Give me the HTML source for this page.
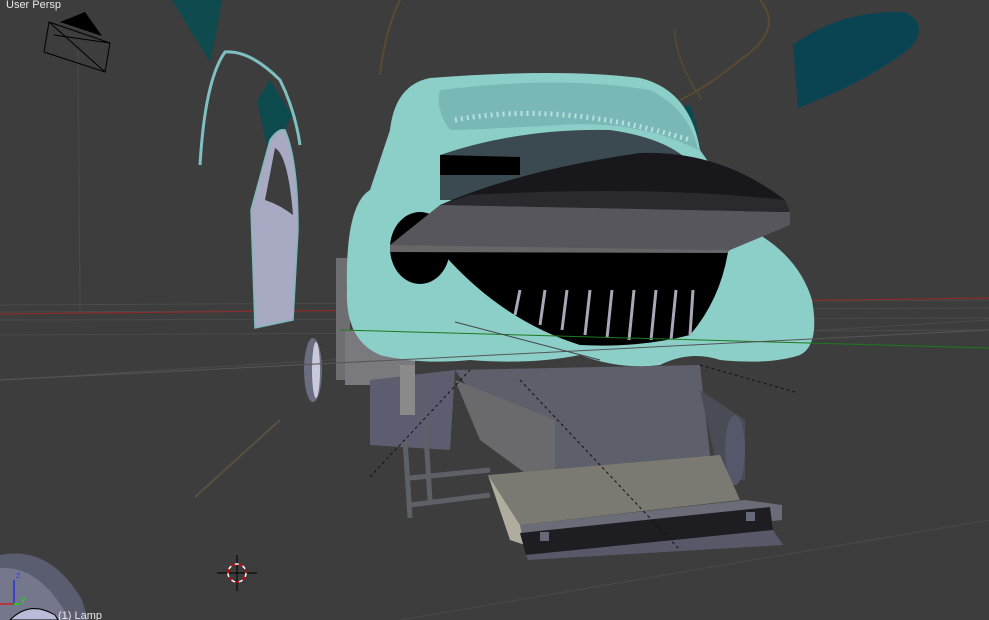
<!DOCTYPE html>
<html><head><style>
html,body{margin:0;padding:0;background:#3d3d3d;overflow:hidden}
svg{display:block}
text{font-family:"Liberation Sans",sans-serif;font-size:11px;fill:#e8e8e8}
</style></head><body>
<svg width="989" height="620" viewBox="0 0 989 620" xmlns="http://www.w3.org/2000/svg">
<rect width="989" height="620" fill="#3d3d3d"/>
<!-- grid -->
<g stroke="#4a4a4a" stroke-width="1" fill="none">
<line x1="0" y1="305" x2="989" y2="300"/>
<line x1="0" y1="312" x2="989" y2="308"/>
<line x1="0" y1="320" x2="989" y2="318"/>
<line x1="0" y1="335" x2="989" y2="330"/>
<line x1="0" y1="380" x2="989" y2="320"/>
<line x1="400" y1="620" x2="989" y2="520"/>
<line x1="78" y1="50" x2="80" y2="310"/>
</g>
<line x1="0" y1="314" x2="380" y2="310" stroke="#8a2a2a" stroke-width="1.2"/>
<line x1="760" y1="301" x2="989" y2="298" stroke="#8a2a2a" stroke-width="1.2"/>
<!-- camera -->
<polygon points="60,22 85,12 102,36" fill="#000"/>
<polygon points="49,22 110,43 105,72 44,52" fill="none" stroke="#000" stroke-width="1"/>
<line x1="49" y1="22" x2="105" y2="72" stroke="#000"/>
<line x1="54" y1="35" x2="110" y2="43" stroke="#000"/>
<text x="6" y="8">User Persp</text>
<!-- teal flaps -->
<path d="M172,0 L222,0 Q215,40 210,62 Q190,30 172,0Z" fill="#0e4a4e"/>
<path d="M793,45 Q840,10 905,12 Q930,25 910,48 Q870,80 798,108 Z" fill="#0a4452"/>
<path d="M670,110 L690,105 Q700,130 698,150 L675,150Z" fill="#0b4a50"/>
<path d="M380,75 Q385,30 400,0 M760,0 Q785,30 740,60 Q710,85 680,100" stroke="#5a4a30" stroke-width="2" fill="none"/>
<path d="M702,100 Q675,60 675,30" stroke="#5a4a30" stroke-width="1.5" fill="none"/>
<!-- door -->
<path d="M200,165 Q205,80 225,52 Q250,50 280,80 Q295,110 300,145" stroke="#7fc0c2" stroke-width="3" fill="none"/>
<path d="M257,100 L270,80 L292,115 L270,160Z" fill="#0d4a4e"/>
<path d="M251,210 L270,140 Q278,128 285,130 Q298,160 298,230 L293,320 L255,328 Z" fill="#a8aac4" stroke="#7fb8b8" stroke-width="1.5"/>
<path d="M265,200 L275,148 Q288,155 293,215 Q280,205 265,200Z" fill="#3d3d3d"/>
<!-- side chassis block -->
<polygon points="336,258 350,258 350,380 336,380" fill="#6e6e72"/>
<polygon points="345,330 415,325 415,385 345,385" fill="#7a7a7e"/>
<!-- wheel left -->
<ellipse cx="313" cy="370" rx="9" ry="32" fill="#6a6c80"/>
<ellipse cx="316" cy="370" rx="4" ry="28" fill="#c8cadc"/>
<!-- under chassis -->
<polygon points="370,380 455,370 450,450 370,445" fill="#5c5e70"/>
<polygon points="400,365 415,365 415,415 400,415" fill="#8a8a8a"/>
<polygon points="455,370 700,365 715,500 555,495 520,460" fill="#5d5f6a"/>
<polygon points="455,380 555,420 555,495 480,440" fill="#6a6a6c"/>
<polygon points="700,390 745,420 745,480 720,480" fill="#4a4c55"/>
<ellipse cx="735" cy="450" rx="10" ry="35" fill="#55576a"/>
<g stroke="#5e6068" stroke-width="5"><line x1="405" y1="440" x2="410" y2="518"/><line x1="410" y1="505" x2="490" y2="495"/><line x1="410" y1="478" x2="490" y2="470"/><line x1="425" y1="420" x2="430" y2="500"/></g>
<polygon points="488,475 720,455 740,500 520,525" fill="#7a7a72"/>
<polygon points="488,475 520,525 525,545 510,540" fill="#b0ad9e"/>
<polygon points="520,525 745,500 782,505 782,520 525,548" fill="#6a6c78"/>
<polygon points="520,533 770,507 773,530 526,555" fill="#1e1e22"/>
<polygon points="526,555 773,530 783,545 528,560" fill="#575968"/>
<rect x="540" y="532" width="9" height="9" fill="#66697a"/>
<rect x="746" y="512" width="9" height="9" fill="#66697a"/>
<g stroke="#111" stroke-width="1" stroke-dasharray="3,3" fill="none">
<line x1="370" y1="477" x2="470" y2="370"/><line x1="520" y1="380" x2="680" y2="550"/><line x1="700" y1="365" x2="795" y2="392"/>
</g>
<line x1="195" y1="497" x2="280" y2="420" stroke="#5a5040" stroke-width="2"/>
<!-- car body teal -->
<path d="M390,130 Q395,85 430,78 Q560,68 640,78 Q690,90 700,150 L760,235 Q800,260 812,300 Q820,345 800,355 Q770,365 720,360 Q690,350 660,365 Q620,370 580,355 Q530,365 470,360 Q420,365 380,355 Q345,340 347,290 Q345,205 370,190 Q380,160 390,130Z" fill="#8ccfc8"/>
<path d="M440,90 Q560,75 650,90 Q690,110 698,150 Q640,120 560,125 Q470,130 450,130 Q435,110 440,90Z" fill="#7ab8b8"/>
<path d="M440,155 Q520,128 610,130 Q680,140 700,175 L700,200 L440,200Z" fill="#3b4a50"/>
<polygon points="440,155 520,157 520,175 440,175" fill="#000"/>
<path d="M455,120 Q560,100 690,140" stroke="#b8e0de" stroke-width="5" stroke-dasharray="2,4" fill="none"/>
<!-- mouth -->
<path d="M440,250 L728,252 Q720,300 690,335 Q640,348 580,345 Q500,320 440,250Z" fill="#000"/>
<g stroke="#a8a8b8" stroke-width="3"><line x1="520" y1="290" x2="515" y2="315"/><line x1="545" y1="290" x2="540" y2="325"/><line x1="567" y1="290" x2="562" y2="330"/><line x1="590" y1="290" x2="585" y2="335"/><line x1="612" y1="290" x2="607" y2="338"/><line x1="634" y1="290" x2="629" y2="340"/><line x1="656" y1="290" x2="651" y2="340"/><line x1="676" y1="290" x2="671" y2="340"/><line x1="693" y1="290" x2="690" y2="335"/></g>
<ellipse cx="420" cy="248" rx="30" ry="36" fill="#000"/>
<!-- hood -->
<polygon points="390,245 440,205 790,212 790,225 730,250 390,252" fill="#56565c"/>
<polygon points="390,245 730,250 727,253 390,252" fill="#666"/>
<path d="M440,205 Q520,170 640,153 Q720,150 785,200 L790,212 Z" fill="#18181c"/>
<path d="M440,205 L790,212 L785,200 Q650,185 470,195Z" fill="#2a2a2e"/>
<!-- grid lines over -->
<line x1="340" y1="330" x2="989" y2="348" stroke="#1d7a1d" stroke-width="1"/>
<line x1="0" y1="380" x2="989" y2="330" stroke="#555" stroke-width="1"/>
<line x1="455" y1="322" x2="600" y2="360" stroke="#444" stroke-width="1"/>
<!-- bottom-left wheel -->
<path d="M0,555 Q50,545 82,600 L88,620 L0,620Z" fill="#5a5c70"/>
<path d="M0,568 Q40,565 70,620 L0,620Z" fill="#75778c"/>
<path d="M10,620 Q30,600 55,615 L58,620Z" fill="#b8bcd8" stroke="#000" stroke-width="1"/>
<!-- axis -->
<line x1="14" y1="580" x2="14" y2="604" stroke="#2233dd" stroke-width="1.5"/>
<line x1="0" y1="604" x2="14" y2="604" stroke="#cc2222" stroke-width="1.5"/>
<line x1="14" y1="604" x2="19" y2="604" stroke="#22cc22" stroke-width="2"/>
<text x="16" y="578" style="fill:#3344ee;font-size:9px">z</text>
<text x="21" y="602" style="fill:#33cc33;font-size:9px">y</text>
<text x="58" y="619">(1) Lamp</text>
<!-- 3D cursor -->
<g transform="translate(237,573)">
<line x1="-20" y1="0" x2="20" y2="0" stroke="#000"/><line x1="0" y1="-18" x2="0" y2="18" stroke="#000"/>
<circle r="9" fill="none" stroke="#fff" stroke-width="1.5" stroke-dasharray="4,4"/>
<circle r="9" fill="none" stroke="#d00" stroke-width="1.5" stroke-dasharray="4,4" stroke-dashoffset="4"/>
</g>
</svg>
</body></html>
